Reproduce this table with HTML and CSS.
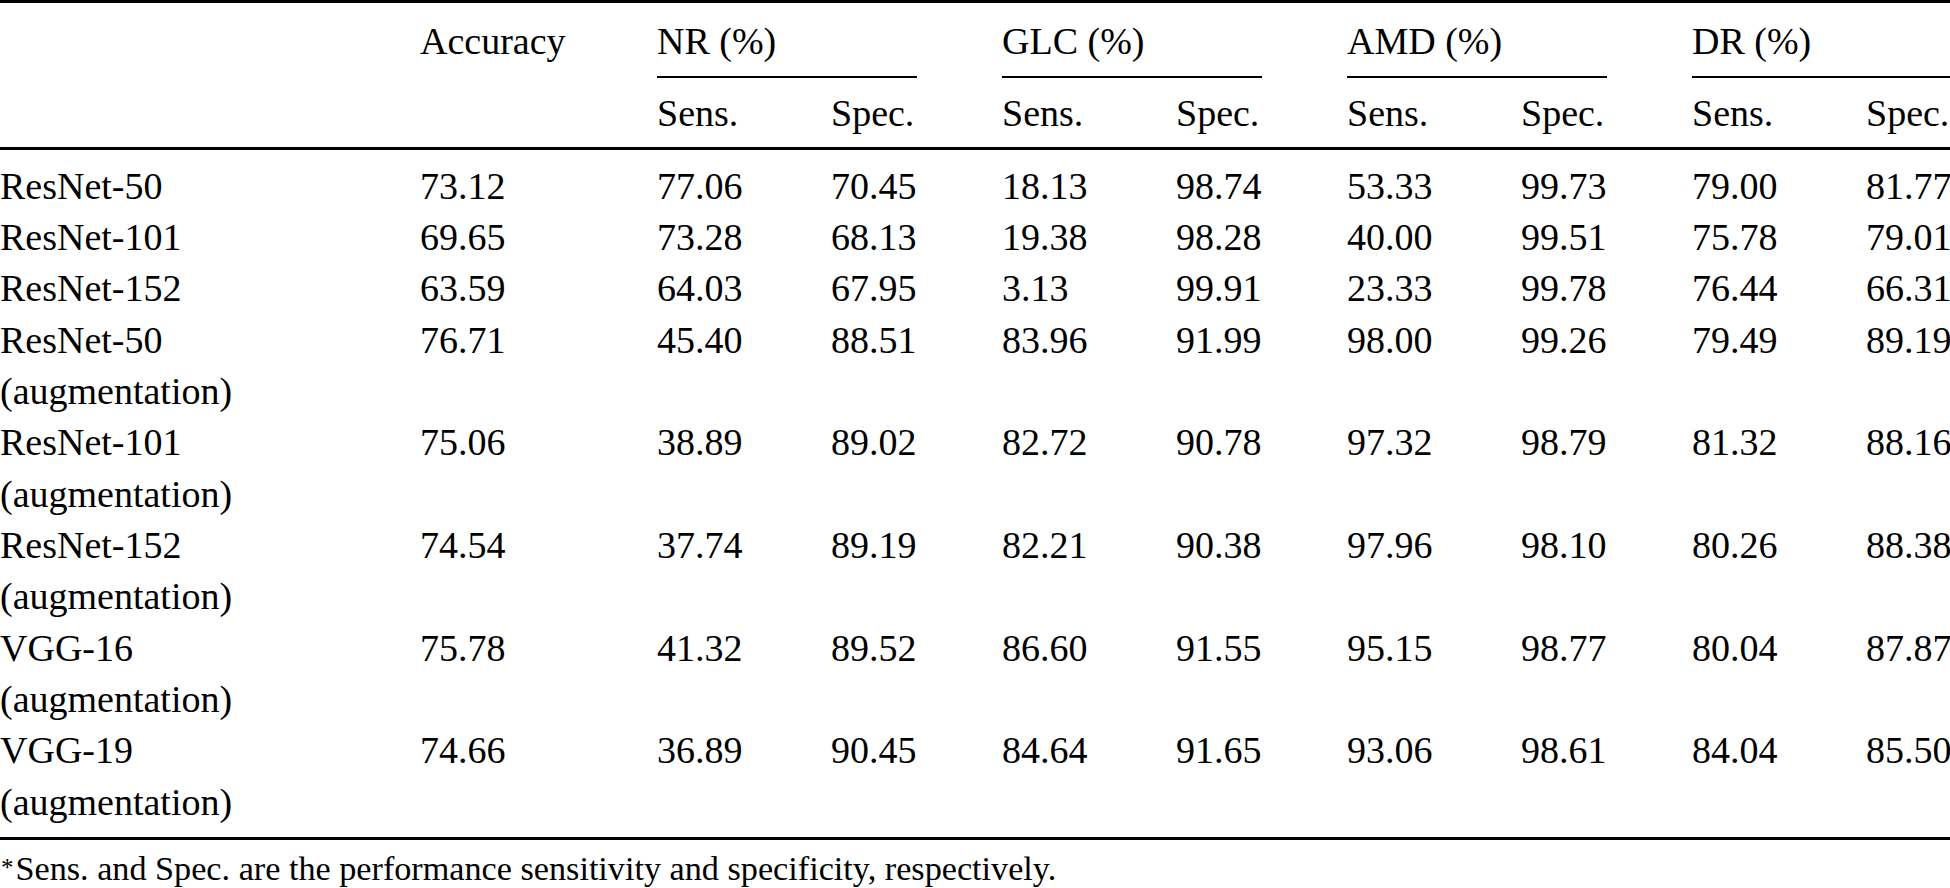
FILE: index.html
```html
<!DOCTYPE html>
<html>
<head>
<meta charset="utf-8">
<title>Results table</title>
<link rel="stylesheet" href="styles.css">
</head>
<body>
<table class="results">
  <colgroup>
    <col class="c-label">
    <col class="c-acc">
    <col class="c-sens"><col class="c-spec">
    <col class="c-sens"><col class="c-spec">
    <col class="c-sens"><col class="c-spec">
    <col class="c-sens"><col class="c-spec">
  </colgroup>
  <thead>
    <tr class="head-top">
      <th></th>
      <th>Accuracy</th>
      <th colspan="2"><span class="group">NR (%)</span></th>
      <th colspan="2"><span class="group">GLC (%)</span></th>
      <th colspan="2"><span class="group">AMD (%)</span></th>
      <th colspan="2"><span class="group">DR (%)</span></th>
    </tr>
    <tr class="head-sub">
      <th></th>
      <th></th>
      <th>Sens.</th><th>Spec.</th>
      <th>Sens.</th><th>Spec.</th>
      <th>Sens.</th><th>Spec.</th>
      <th>Sens.</th><th>Spec.</th>
    </tr>
  </thead>
  <tbody>
    <tr class="first">
      <td>ResNet-50</td><td>73.12</td><td>77.06</td><td>70.45</td><td>18.13</td><td>98.74</td><td>53.33</td><td>99.73</td><td>79.00</td><td>81.77</td>
    </tr>
    <tr>
      <td>ResNet-101</td><td>69.65</td><td>73.28</td><td>68.13</td><td>19.38</td><td>98.28</td><td>40.00</td><td>99.51</td><td>75.78</td><td>79.01</td>
    </tr>
    <tr>
      <td>ResNet-152</td><td>63.59</td><td>64.03</td><td>67.95</td><td>3.13</td><td>99.91</td><td>23.33</td><td>99.78</td><td>76.44</td><td>66.31</td>
    </tr>
    <tr>
      <td>ResNet-50<br>(augmentation)</td><td>76.71</td><td>45.40</td><td>88.51</td><td>83.96</td><td>91.99</td><td>98.00</td><td>99.26</td><td>79.49</td><td>89.19</td>
    </tr>
    <tr>
      <td>ResNet-101<br>(augmentation)</td><td>75.06</td><td>38.89</td><td>89.02</td><td>82.72</td><td>90.78</td><td>97.32</td><td>98.79</td><td>81.32</td><td>88.16</td>
    </tr>
    <tr>
      <td>ResNet-152<br>(augmentation)</td><td>74.54</td><td>37.74</td><td>89.19</td><td>82.21</td><td>90.38</td><td>97.96</td><td>98.10</td><td>80.26</td><td>88.38</td>
    </tr>
    <tr>
      <td>VGG-16<br>(augmentation)</td><td>75.78</td><td>41.32</td><td>89.52</td><td>86.60</td><td>91.55</td><td>95.15</td><td>98.77</td><td>80.04</td><td>87.87</td>
    </tr>
    <tr class="last">
      <td>VGG-19<br>(augmentation)</td><td>74.66</td><td>36.89</td><td>90.45</td><td>84.64</td><td>91.65</td><td>93.06</td><td>98.61</td><td>84.04</td><td>85.50</td>
    </tr>
  </tbody>
</table>
<p class="footnote"><sup class="mark">*</sup>Sens. and Spec. are the performance sensitivity and specificity, respectively.</p>
</body>
</html>
```

FILE: styles.css
```css
html, body {
  margin: 0;
  padding: 0;
  background: #fff;
  overflow: hidden;
}

body {
  font-family: "Liberation Serif", "Times New Roman", serif;
  color: #000;
  font-size: 38px;
  width: 1950px;
}

.results {
  border-collapse: collapse;
  table-layout: fixed;
  width: 2030px;
  border-top: 3px solid #000;
  border-bottom: 3px solid #000;
}

.c-label { width: 420px; }
.c-acc { width: 237px; }
.c-sens { width: 174px; }
.c-spec { width: 171px; }

.results th,
.results td {
  padding: 0;
  text-align: left;
  vertical-align: top;
  font-weight: normal;
  line-height: 51.33px;
  white-space: nowrap;
}

.head-top th {
  padding-top: 13px;
}

.group {
  display: block;
  width: 260px;
  padding-bottom: 9px;
  border-bottom: 2px solid #000;
}

.head-sub th {
  padding-top: 9.5px;
  padding-bottom: 7.5px;
  border-bottom: 3px solid #000;
}

.first td {
  padding-top: 11px;
}

.last td {
  padding-bottom: 8.8px;
}

.footnote {
  margin: 9px 0 0;
  font-size: 34.2px;
  line-height: 40px;
  white-space: nowrap;
}

.mark {
  display: inline-block;
  font-size: 25px;
  line-height: 1;
  vertical-align: top;
  margin: 6px 2px 0 1px;
}
```
